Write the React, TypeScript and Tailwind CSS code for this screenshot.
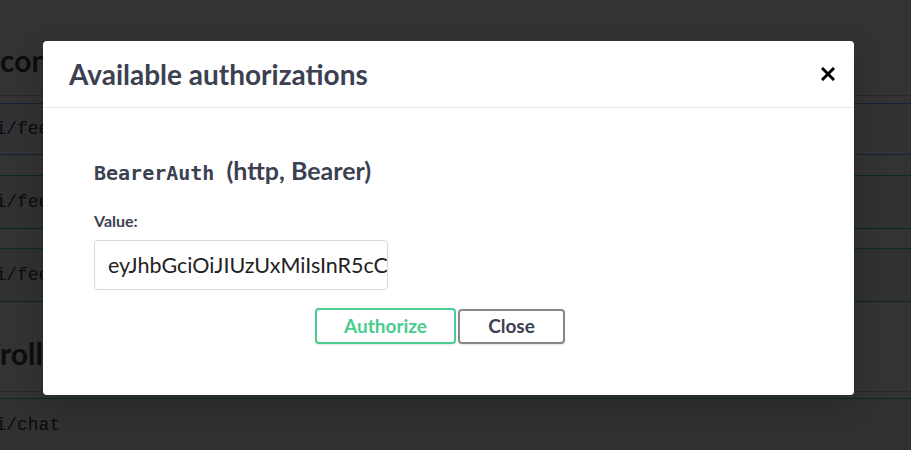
function CloseIcon() {
  return (
    <svg width="14" height="14" viewBox="0 0 14 14" aria-hidden="true">
      <path d="M2 2 L12 12 M12 2 L2 12" stroke="#000" strokeWidth="3" strokeLinecap="square" />
    </svg>
  )
}

function OpBlock({ path, kind, className }: { path: string; kind: 'get' | 'post'; className: string }) {
  const tone =
    kind === 'get'
      ? 'border-[#61affe] bg-[#61affe]/10'
      : 'border-[#49cc90] bg-[#49cc90]/10'
  return (
    <div className={`flex items-center rounded-[4px] border pl-[22px] ${tone} ${className}`}>
      <span className="font-['Liberation_Mono',monospace] text-[18px] text-[#3b4151]">{path}</span>
    </div>
  )
}

function PageBehind() {
  return (
    <div className="-ml-[60px] w-[1040px] font-['Lato',sans-serif] text-[#3b4151]">
      <div className="border-b border-[#3b4151]/30 pl-[60px] pt-[40px] pb-[15px]">
        <h3 className="text-[30px] font-bold leading-[40px]">content</h3>
      </div>
      <OpBlock kind="get" path="/api/feed/list" className="mt-[7px] h-[52px]" />
      <OpBlock kind="post" path="/api/feed/like" className="mt-[20px] h-[54px]" />
      <OpBlock kind="post" path="/api/feed/save" className="mt-[19px] h-[54px]" />
      <div className="border-b border-[#3b4151]/30 pl-[60px] pt-[31px] pb-[18px]">
        <h3 className="text-[30px] font-bold leading-[40px]">rollout</h3>
      </div>
      <OpBlock kind="post" path="/api/chat" className="mt-[6px] h-[54px]" />
    </div>
  )
}

function AuthModal() {
  return (
    <div className="absolute left-[43px] top-[41px] h-[354px] w-[811px] rounded-[4px] bg-white font-['Lato',sans-serif] text-[#3b4151] shadow-[0_10px_30px_rgba(0,0,0,0.2)]">
      <div className="flex h-[67px] items-center justify-between border-b border-[#ebebeb] pl-[26px] pr-[19px]">
        <h3 className="text-[28px] font-bold leading-[36px]">Available authorizations</h3>
        <button className="flex h-[14px] w-[14px] items-center justify-center">
          <CloseIcon />
        </button>
      </div>

      <div className="pl-[51px] pr-[68px] pt-[48px]">
        <h4 className="flex items-baseline text-[25px] font-bold leading-[28px]">
          <code className="font-['DejaVu_Sans_Mono',monospace] text-[20px]">BearerAuth</code>
          <span className="ml-[12px]">(http, Bearer)</span>
        </h4>

        <label className="mt-[24px] block text-[16px] font-bold leading-[20px]">Value:</label>
        <input
          readOnly
          value="eyJhbGciOiJIUzUxMiIsInR5cCI6IkpXVCJ9"
          className="mt-[9px] block h-[50px] w-[294px] rounded-[4px] border border-[#d9d9d9] bg-white pl-[13px] text-[21.5px] text-[#222] outline-none"
        />

        <div className="mt-[18px] flex justify-center gap-[2px]">
          <button className="h-[36px] w-[141px] rounded-[4px] border-2 border-[#49cc90] text-[19px] font-bold text-[#49cc90] shadow-[0_1px_2px_rgba(0,0,0,0.1)]">
            Authorize
          </button>
          <button className="mt-[1px] h-[35px] w-[107px] rounded-[4px] border-2 border-[#888] text-[19px] font-bold text-[#3b4151] shadow-[0_1px_2px_rgba(0,0,0,0.1)]">
            Close
          </button>
        </div>
      </div>
    </div>
  )
}

export default function App() {
  return (
    <div className="relative h-[450px] w-[911px] overflow-hidden bg-white">
      <PageBehind />
      <div className="absolute inset-0 bg-black/80" />
      <AuthModal />
    </div>
  )
}
